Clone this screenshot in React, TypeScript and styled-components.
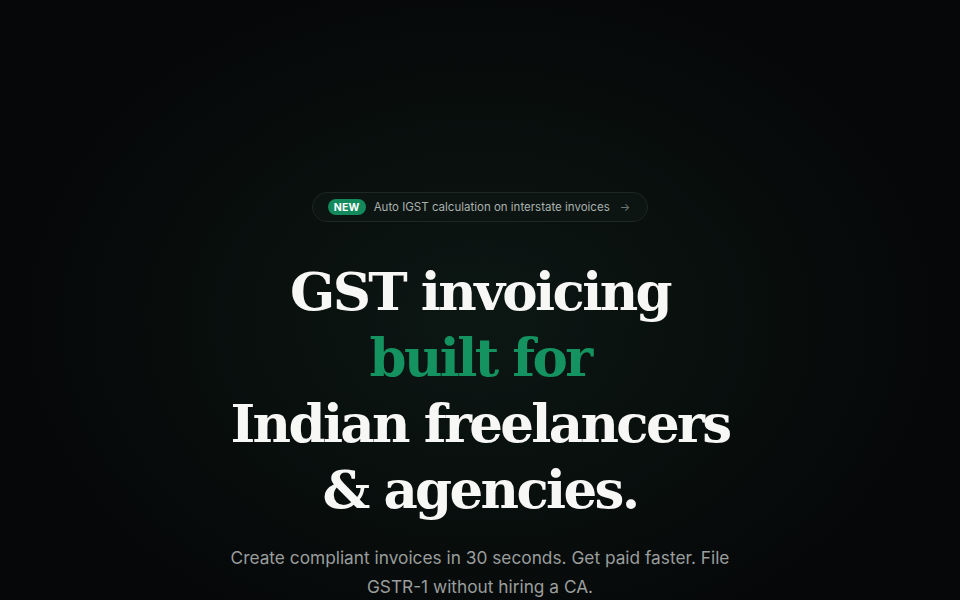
import React from "react";
import styled, { createGlobalStyle } from "styled-components";

const GlobalStyle = createGlobalStyle`
  html, body {
    margin: 0;
    padding: 0;
    background: #060708;
  }
  * {
    box-sizing: border-box;
  }
`;

const Page = styled.main`
  width: 960px;
  height: 600px;
  overflow: hidden;
  display: flex;
  flex-direction: column;
  align-items: center;
  padding-top: 192px;
  background: radial-gradient(
    ellipse 480px 360px at 480px 320px,
    #0c1714 0%,
    #09100e 45%,
    #060708 100%
  );
  font-family: Inter, "Noto Sans", sans-serif;

  & > * {
    flex-shrink: 0;
  }
`;

const Badge = styled.a`
  display: flex;
  align-items: center;
  gap: 8px;
  height: 30px;
  padding: 0 17px 0 15px;
  border-radius: 999px;
  border: 1px solid #1d2724;
  background: #0d1513;
  color: #a9b1ad;
  font-size: 11.5px;
  text-decoration: none;
`;

const NewPill = styled.span`
  display: inline-flex;
  align-items: center;
  height: 16px;
  padding: 0 6px;
  border-radius: 999px;
  background: #128a5c;
  color: #ffffff;
  font-size: 10.5px;
  font-weight: 700;
  letter-spacing: 0.02em;
`;

const Arrow = styled.span`
  color: #6f7874;
  font-size: 11px;
  margin-left: 2px;
`;

const Heading = styled.h1`
  margin: 36px 0 0;
  font-family: "DejaVu Serif", "Liberation Serif", serif;
  font-weight: 700;
  font-size: 53px;
  line-height: 66px;
  letter-spacing: -0.05em;
  color: #f7f7f5;
  text-align: center;
`;

const Accent = styled.span`
  color: #14925f;
`;

const Lead = styled.p`
  margin: 21px 0 0;
  width: 530px;
  font-size: 17.3px;
  line-height: 29px;
  color: #9a9e9d;
  text-align: center;
`;

export default function App() {
  return (
    <>
      <GlobalStyle />
      <Page>
        <Badge href="#">
          <NewPill>NEW</NewPill>
          Auto IGST calculation on interstate invoices
          <Arrow>→</Arrow>
        </Badge>
        <Heading>
          GST invoicing
          <br />
          <Accent>built for</Accent>
          <br />
          Indian freelancers
          <br />
          &amp; agencies.
        </Heading>
        <Lead>
          Create compliant invoices in 30 seconds. Get paid faster. File
          GSTR-1 without hiring a CA.
        </Lead>
      </Page>
    </>
  );
}
